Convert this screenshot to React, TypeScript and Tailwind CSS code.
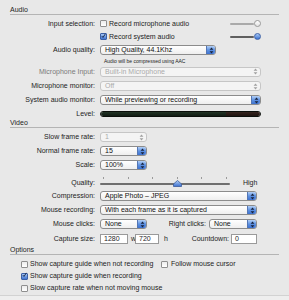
import React from 'react';

type PopupProps = { text: string; w: string; disabled?: boolean };

const Arrows = ({ color }: { color: string }) => (
  <svg width="5" height="7" viewBox="0 0 5 7">
    <path d="M2.5 0.6 L4.4 2.8 L0.6 2.8Z M2.5 6.4 L4.4 4.2 L0.6 4.2Z" fill={color} />
  </svg>
);

const Popup = ({ text, w, disabled }: PopupProps) => (
  <div
    className={`${w} h-[10px] flex items-center rounded-[3px] border overflow-hidden ${
      disabled
        ? 'border-[#c6c6c6] bg-[#f4f4f4] text-[#ababab]'
        : 'border-[#8c8c8c] bg-gradient-to-b from-white to-[#eeeeee] text-[#111]'
    }`}
  >
    <span className="flex-1 pl-[4px] leading-[8px] whitespace-nowrap overflow-hidden">{text}</span>
    <div
      className={`w-[9px] h-full flex items-center justify-center ${
        disabled ? '' : 'bg-gradient-to-b from-[#b3cff5] via-[#5e92e2] to-[#3d71cf] border-l border-[#5476b4]'
      }`}
    >
      <Arrows color={disabled ? '#a0a0a0' : '#17223d'} />
    </div>
  </div>
);

const Check = ({ on }: { on?: boolean }) =>
  on ? (
    <div className="w-[7px] h-[7px] shrink-0 rounded-[1px] border border-[#3b5fa6] bg-gradient-to-b from-[#a6c6f3] to-[#3f73d0] flex items-center justify-center">
      <svg width="8" height="8" viewBox="0 0 8 8" className="-mt-[2px]">
        <path d="M1.4 4.2 L3.2 6.3 L7 0.6" stroke="#0f1d3a" strokeWidth="1.4" fill="none" />
      </svg>
    </div>
  ) : (
    <div className="w-[7px] h-[7px] shrink-0 rounded-[1px] border border-[#8f8f8f] bg-gradient-to-b from-[#ececec] to-white" />
  );

const Row = ({ label, h, dim, children }: { label: string; h: string; dim?: boolean; children?: React.ReactNode }) => (
  <div className={`flex items-center ${h}`}>
    <div className={`w-[95px] text-right leading-[8px] whitespace-nowrap ${dim ? 'text-[#7a7a7a]' : ''}`}>{label}</div>
    <div className="ml-[5px] w-[161px] flex items-center">{children}</div>
  </div>
);

const Header = ({ title, h }: { title: string; h: string }) => (
  <div className={`mx-[10px] flex items-end border-b border-[#b4b4b4] ${h}`}>
    <span className="leading-[7px] pb-[1px]">{title}</span>
  </div>
);

const TopSlider = ({ on }: { on?: boolean }) => (
  <div className="ml-auto flex items-center">
    <div className={`w-[24px] h-[2px] rounded-full ${on ? 'bg-[#5f5f5f]' : 'bg-[#aaaaaa]'}`} />
    <div
      className={`w-[7px] h-[7px] rounded-full border ${
        on ? 'border-[#3d62a8] bg-gradient-to-b from-[#a8c8f5] to-[#3d72d0]' : 'border-[#9a9a9a] bg-gradient-to-b from-white to-[#e2e2e2]'
      }`}
    />
  </div>
);

const Field = ({ value, w }: { value: string; w: string }) => (
  <div className={`${w} h-[10px] shrink-0 border border-[#9a9a9a] bg-white pl-[3px] flex items-center leading-[8px]`}>
    {value}
  </div>
);

export default function App() {
  return (
    <div className="w-[289px] h-[300px] bg-[#e8e8e8] text-[7px] text-[#1c1c1c] font-['Liberation_Sans',Arial,sans-serif] flex flex-col overflow-hidden">
      <Header title="Audio" h="h-[15px]" />
      <div className="mt-[2px]" />
      <Row label="Input selection:" h="h-[13px]">
        <Check />
        <span className="ml-[2px] leading-[8px] whitespace-nowrap">Record microphone audio</span>
        <TopSlider />
      </Row>
      <Row label="" h="h-[13px]">
        <Check on />
        <span className="ml-[2px] leading-[8px] whitespace-nowrap">Record system audio</span>
        <TopSlider on />
      </Row>
      <Row label="Audio quality:" h="h-[14px]">
        <Popup text="High Quality, 44.1Khz" w="w-[116px]" />
      </Row>
      <div className="h-[7px] flex items-center pl-[104px] text-[5px] leading-[6px]">
        Audio will be compressed using AAC
      </div>
      <Row label="Microphone Input:" h="h-[15px]" dim>
        <Popup text="Built-in Microphone" w="w-[161px]" disabled />
      </Row>
      <Row label="Microphone monitor:" h="h-[14px]">
        <Popup text="Off" w="w-[161px]" disabled />
      </Row>
      <Row label="System audio monitor:" h="h-[14px]">
        <Popup text="While previewing or recording" w="w-[161px]" />
      </Row>
      <Row label="Level:" h="h-[13px]">
        <div className="w-[161px] h-[6px] rounded-full overflow-hidden flex border border-[#0b0f0b]">
          <div className="flex-1 bg-gradient-to-b from-[#223426] to-[#111c14]" />
          <div className="w-[34px] bg-gradient-to-b from-[#35241f] to-[#1f1410]" />
        </div>
      </Row>

      <Header title="Video" h="h-[8px]" />
      <div className="mt-[2px]" />
      <Row label="Slow frame rate:" h="h-[14px]">
        <Popup text="1" w="w-[47px]" disabled />
      </Row>
      <Row label="Normal frame rate:" h="h-[14px]">
        <Popup text="15" w="w-[47px]" />
      </Row>
      <Row label="Scale:" h="h-[14px]">
        <Popup text="100%" w="w-[47px]" />
      </Row>
      <div className="flex items-start h-[17px]">
        <div className="w-[95px] text-right leading-[7px] pt-[7px]">Quality:</div>
        <div className="ml-[5px] flex items-start h-full">
          <div className="relative w-[130px] h-full flex flex-col pt-[5px]">
            <div className="h-[2px] flex justify-between px-[3px]">
              <div className="w-[1px] bg-[#9a9a9a]" />
              <div className="w-[1px] bg-[#9a9a9a]" />
              <div className="w-[1px] bg-[#9a9a9a]" />
              <div className="w-[1px] bg-[#9a9a9a]" />
              <div className="w-[1px] bg-[#9a9a9a]" />
              <div className="w-[1px] bg-[#9a9a9a]" />
            </div>
            <div className="mt-[4px] h-[2px] rounded-full bg-[#6f6f6f]" />
            <svg width="9" height="7" viewBox="0 0 9 7" className="absolute left-[73px] top-[8px]">
              <defs>
                <linearGradient id="kn" x1="0" y1="0" x2="0" y2="1">
                  <stop offset="0" stopColor="#b0cdf5" />
                  <stop offset="1" stopColor="#3c70cf" />
                </linearGradient>
              </defs>
              <path d="M4.5 0.5 L8.5 4 L8.5 6.5 L0.5 6.5 L0.5 4Z" fill="url(#kn)" stroke="#3a5c9e" strokeWidth="0.8" />
            </svg>
          </div>
          <span className="ml-[13px] pt-[7px] leading-[7px]">High</span>
        </div>
      </div>
      <Row label="Compression:" h="h-[14px]">
        <Popup text="Apple Photo – JPEG" w="w-[157px]" />
      </Row>
      <Row label="Mouse recording:" h="h-[14px]">
        <Popup text="With each frame as it is captured" w="w-[157px]" />
      </Row>
      <Row label="Mouse clicks:" h="h-[14px]">
        <Popup text="None" w="w-[47px]" />
        <div className="w-[59px] text-right leading-[8px] whitespace-nowrap">Right clicks:</div>
        <div className="ml-[3px]">
          <Popup text="None" w="w-[48px]" />
        </div>
      </Row>
      <div className="mt-[1px]" />
      <Row label="Capture size:" h="h-[14px]">
        <Field value="1280" w="w-[28px]" />
        <span className="ml-[3px] w-[4px] leading-[8px]">w</span>
        <Field value="720" w="w-[24px]" />
        <span className="ml-[5px] leading-[8px]">h</span>
        <div className="flex-1 text-right pr-[2px] leading-[8px] whitespace-nowrap">Countdown:</div>
        <Field value="0" w="w-[26px]" />
        <div className="w-[4px]" />
      </Row>

      <Header title="Options" h="h-[9px]" />
      <div className="mt-[3px]" />
      <div className="h-[12px] flex items-center pl-[21px]">
        <div className="w-[140px] flex items-center">
          <Check />
          <span className="ml-[2px] leading-[8px] whitespace-nowrap">Show capture guide when not recording</span>
        </div>
        <Check />
        <span className="ml-[3px] leading-[8px] whitespace-nowrap">Follow mouse cursor</span>
      </div>
      <div className="h-[12px] flex items-center pl-[21px]">
        <Check on />
        <span className="ml-[2px] leading-[8px] whitespace-nowrap">Show capture guide when recording</span>
      </div>
      <div className="h-[12px] flex items-center pl-[21px]">
        <Check />
        <span className="ml-[2px] leading-[8px] whitespace-nowrap">Slow capture rate when not moving mouse</span>
      </div>
      <div className="mt-[1px] flex-1 border-t border-[#d2d2d2] bg-[#eeeeee]" />
    </div>
  );
}
